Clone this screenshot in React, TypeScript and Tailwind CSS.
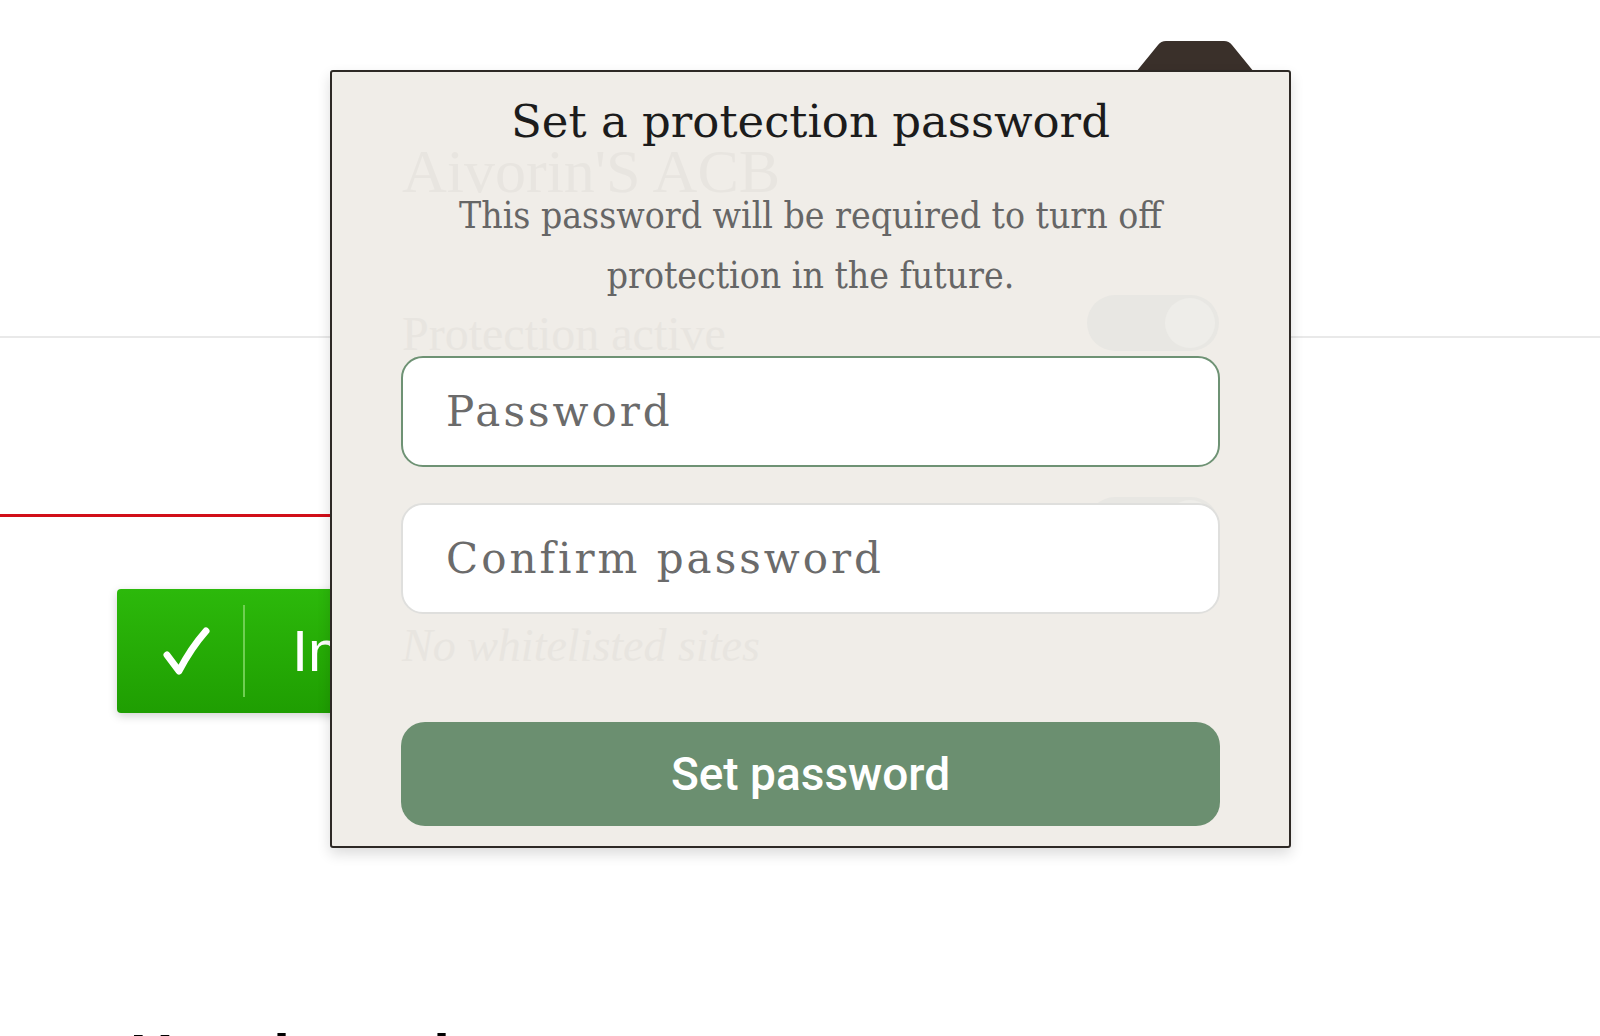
import { useState } from "react";

const Toggle = () => (
  <div className="flex h-[56px] w-[132px] items-center justify-end rounded-full bg-[#e8e7e3] px-[4px]">
    <div className="h-[50px] w-[50px] rounded-full bg-[#eeede9]" />
  </div>
);

const PasswordDialog = () => {
  const [password, setPassword] = useState("");
  const [confirm, setConfirm] = useState("");

  return (
    <div className="absolute inset-0 flex flex-col items-center px-[69px] pt-[24px]">
      <h2 className="text-[45px] leading-[52px] font-normal text-[#1c1c1c] font-['DejaVu_Serif',serif]">
        Set a protection password
      </h2>
      <p className="mt-[38px] max-w-[780px] text-center text-[37px] leading-[60px] text-[#666] [font-stretch:condensed] font-['DejaVu_Serif_Condensed','DejaVu_Serif',serif]">
        This password will be required to turn off protection in the future.
      </p>
      <input
        type="password"
        value={password}
        onChange={(event) => setPassword(event.target.value)}
        placeholder="Password"
        className="mt-[50px] h-[111px] w-full rounded-[22px] border-2 border-[#6e9274] bg-white px-[43px] text-[42px] tracking-[3px] text-[#333] outline-none placeholder:text-[#6b6b6b] font-['DejaVu_Serif',serif]"
      />
      <input
        type="password"
        value={confirm}
        onChange={(event) => setConfirm(event.target.value)}
        placeholder="Confirm password"
        className="mt-[36px] h-[111px] w-full rounded-[22px] border-2 border-[#dfdfdd] bg-white px-[43px] text-[42px] tracking-[3px] text-[#333] outline-none placeholder:text-[#6b6b6b] font-['DejaVu_Serif',serif]"
      />
      <button className="mt-[108px] h-[104px] w-full rounded-[24px] bg-[#6b8f70] text-[46px] font-medium text-white font-['Roboto',sans-serif]">
        Set password
      </button>
    </div>
  );
};

export default function App() {
  return (
    <div className="relative h-[1036px] w-full overflow-hidden bg-white">
      <div className="pt-[336px]">
        <div className="h-[2px] w-full bg-[#e9e9e9]" />
      </div>
      <div className="mt-[176px] h-[3px] w-[760px] bg-[#d10e18]" />

      <div className="ml-[117px] mt-[72px] flex h-[124px] w-[480px] items-center rounded-[4px] bg-gradient-to-b from-[#2cb90b] to-[#1f9e02] shadow-[0_3px_10px_rgba(0,0,0,0.18)]">
        <div className="flex w-[126px] justify-center pl-[14px]">
          <svg width="48" height="50" viewBox="0 0 48 50" fill="none">
            <path d="M4 29 L16 45 Q28 22 43 5" stroke="white" strokeWidth="7" strokeLinecap="round" strokeLinejoin="round" />
          </svg>
        </div>
        <div className="h-[92px] w-[2px] bg-[#6fcf52]" />
        <span className="ml-[47px] text-[58px] leading-none text-white font-['Liberation_Sans',Arial,sans-serif]">
          Install
        </span>
      </div>

      <h1 className="ml-[130px] mt-[313px] text-[60px] leading-[60px] font-bold text-black font-['Liberation_Sans',Arial,sans-serif]">
        How it works
      </h1>

      {/* popup tab */}
      <svg className="absolute left-[1136px] top-[41px]" width="118" height="31" viewBox="0 0 118 31">
        <path d="M0 31 L22 4 Q25 0 30 0 L88 0 Q93 0 96 4 L118 31 Z" fill="#3a302a" />
      </svg>

      <div className="absolute left-[330px] top-[70px] h-[778px] w-[961px] rounded-[3px] border-2 border-[#2e2925] bg-[#f0ede8] shadow-[0_6px_14px_rgba(0,0,0,0.14)]">
        <div className="flex flex-col px-[70px] text-[#e8e5e0] font-['Liberation_Serif',serif]">
          <div className="mt-[68px] text-[62px] leading-[62px]">Aivorin'S ACB</div>
          <div className="mt-[93px] flex items-start justify-between">
            <div className="mt-[11px] text-[48px] leading-[56px]">Protection active</div>
            <Toggle />
          </div>
          <div className="mt-[135px] flex items-start justify-between">
            <div className="mt-[11px] text-[48px] leading-[56px]">Whitelist mode</div>
            <Toggle />
          </div>
          <div className="mt-[56px] text-[46px] leading-[52px] italic">No whitelisted sites</div>
        </div>
        <PasswordDialog />
      </div>
    </div>
  );
}
